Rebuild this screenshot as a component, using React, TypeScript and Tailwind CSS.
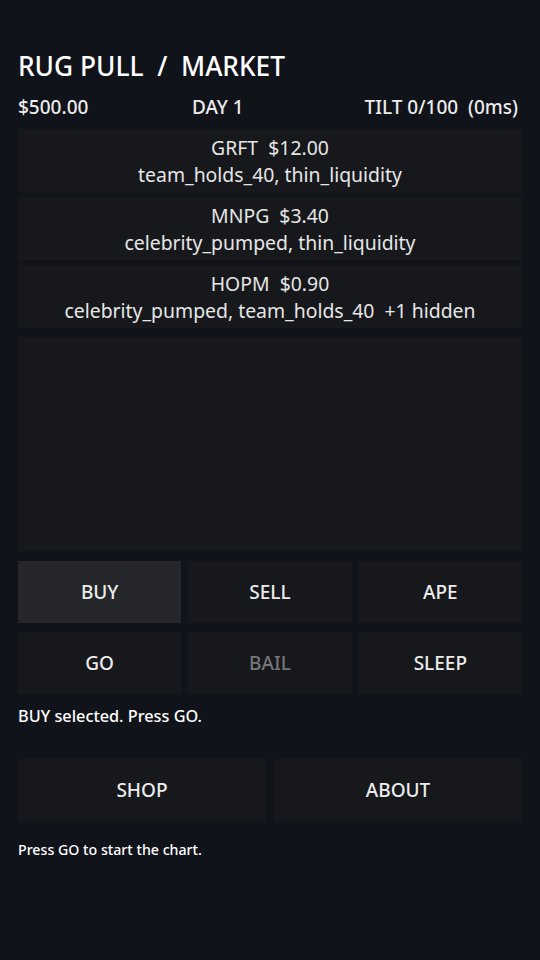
import React from 'react'

const coins = [
  { title: 'GRFT  $12.00', tags: 'team_holds_40, thin_liquidity' },
  { title: 'MNPG  $3.40', tags: 'celebrity_pumped, thin_liquidity' },
  { title: 'HOPM  $0.90', tags: 'celebrity_pumped, team_holds_40  +1 hidden' },
]

const actions = [
  { label: 'BUY', active: true },
  { label: 'SELL' },
  { label: 'APE' },
  { label: 'GO' },
  { label: 'BAIL', disabled: true },
  { label: 'SLEEP' },
]

export default function App() {
  return (
    <div
      className="min-h-[960px] w-full bg-[#11131a] text-[#ececec] px-[18px] pt-[48px]"
      style={{ fontFamily: '"Noto Sans", "Open Sans", sans-serif' }}
    >
      <h1 className="text-[26.3px] leading-[36px] font-medium whitespace-pre text-white">
        RUG PULL  /  MARKET
      </h1>

      <div className="mt-[10px] flex items-center text-[19px] leading-[26px] font-medium whitespace-pre">
        <span className="w-[174px]">$500.00</span>
        <span>DAY 1</span>
        <span className="ml-auto pr-[4px]">TILT 0/100  (0ms)</span>
      </div>

      <div className="mt-[9px] flex flex-col gap-[5px]">
        {coins.map((c, i) => (
          <div
            key={i}
            className="h-[63px] bg-[#17181c] flex flex-col items-center justify-center text-[19.4px] leading-[27px] text-[#e6e6e6]"
          >
            <div className="whitespace-pre">{c.title}</div>
            <div className="whitespace-pre">{c.tags}</div>
          </div>
        ))}
      </div>

      <div className="mt-[9px] h-[214px] bg-[#17181c]" />

      <div className="mt-[10px] grid grid-cols-3 gap-x-[7px] gap-y-[9px]">
        {actions.map((a) => (
          <button
            key={a.label}
            className={
              'h-[62px] flex items-center justify-center text-[19px] font-medium ' +
              (a.active ? 'bg-[#26272b] ' : 'bg-[#17181c] ') +
              (a.disabled ? 'text-[#75767a]' : 'text-[#ececec]')
            }
          >
            {a.label}
          </button>
        ))}
      </div>

      <p className="mt-[12px] text-[16.3px] leading-[20px] font-medium text-white">
        BUY selected. Press GO.
      </p>

      <div className="mt-[33px] grid grid-cols-2 gap-[8px]">
        <button className="h-[62px] bg-[#17181c] flex items-center justify-center text-[19px] font-medium text-[#ececec]">
          SHOP
        </button>
        <button className="h-[62px] bg-[#17181c] flex items-center justify-center text-[19px] font-medium text-[#ececec]">
          ABOUT
        </button>
      </div>

      <p className="mt-[19px] text-[14.2px] leading-[20px] font-medium text-white">
        Press GO to start the chart.
      </p>
    </div>
  )
}
